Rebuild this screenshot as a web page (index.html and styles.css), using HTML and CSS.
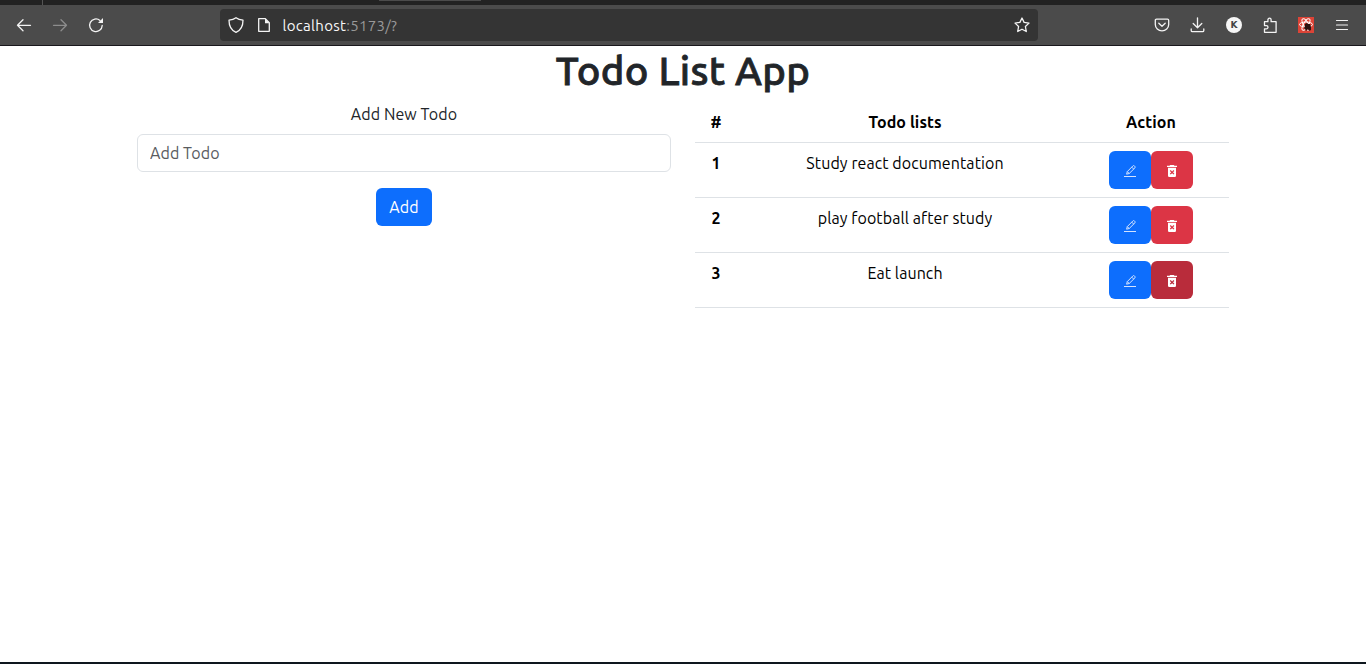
FILE: index.html
```html
<!DOCTYPE html>
<html lang="en">
<head>
<meta charset="utf-8">
<title>Todo List App</title>
<link rel="stylesheet" href="styles.css">
</head>
<body>
<svg class="defs" aria-hidden="true">
  <symbol id="pencil" viewBox="0 0 12 12">
    <path d="M0 11.500h12" stroke="#d2e3ff" stroke-width="1"/>
    <path d="M2.600 9.200 3.300 6.600 8.900.9c.5-.5 1-.5 1.500 0l.5.6c.4.4.4.9 0 1.400L5.200 8.500ZM7.700 2.100l2 2M3.300 6.600l1.900 1.900" stroke="#d2e3ff" stroke-width="1" fill="none"/>
  </symbol>
  <symbol id="trash" viewBox="0 0 10 12">
    <path fill="#fff" fill-rule="evenodd" d="M0 .7h2.500L3.200 0h3.600l.7.700H10V2H0ZM1 2.700h8v8.100q0 1.200-1.200 1.200H2.200Q1 12 1 10.800ZM3.700 5l-.9.900L4.200 7.300 2.800 8.700l.9.900L5.100 8.200l1.400 1.400.9-.9L6 7.300l1.400-1.400-.9-.9-1.400 1.400Z"/>
  </symbol>
</svg>
<div class="tabs"><i class="divider"></i><i class="active-tab"></i></div>
<nav class="toolbar">
  <div class="nav-icons">
    <svg class="icon" viewBox="0 0 16 16"><path d="M14.500 8.300H1.500M7 2.800 1.500 8.300l5.500 5.500"/></svg>
    <svg class="icon dim" viewBox="0 0 16 16"><path d="M1.500 8.300h13M9 2.800l5.500 5.500L9 13.800"/></svg>
    <svg class="icon" viewBox="0 0 16 16"><path d="M14.200 8.500A6.300 6.300 0 1 1 12 3.500"/><path class="solid" d="M15 1v5h-5Z"/></svg>
  </div>
  <div class="address">
    <svg class="icon" viewBox="0 0 16 16"><path d="M8 .7C6 2.200 3.600 2.900 1 3.200c0 6 2 10 7 12.100 5-2.100 7-6.100 7-12.100C12.400 2.900 10 2.200 8 .7Z"/></svg>
    <svg class="icon" viewBox="0 0 16 16"><path d="M2.700 1.700h6.600l4 4v8.600H2.700Z"/><path class="solid" d="M9 1.500v4.700h4.500Z"/></svg>
    <span class="url"><b>localhost</b>:5173/?</span>
    <svg class="icon star" viewBox="0 0 16 16"><path d="m8 1 2.100 4.400 4.900.7-3.600 3.400.9 5L8 12.200l-4.300 2.300.9-5L1 6.100l4.900-.7Z"/></svg>
  </div>
  <div class="tools">
    <svg class="icon" viewBox="0 0 16 16"><path d="M2.500 2.200h11q1.200 0 1.200 1.200v4.100a6.700 6.300 0 0 1-13.400 0V3.400q0-1.200 1.200-1.200Z"/><path d="m4.800 6.200 3.200 3 3.200-3"/></svg>
    <svg class="icon" viewBox="0 0 16 16"><path d="M7.500.8V10.500M3.200 6.500l4.300 4.200 4.300-4.200M1.200 12v1.500q0 1.200 1.200 1.200h10.200q1.200 0 1.200-1.200V12"/></svg>
    <span class="avatar">K</span>
    <svg class="icon" viewBox="0 0 16 16"><path d="M2.500 6V4.700h3.400V2.800a1.600 1.600 0 0 1 3.200 0v1.900h5v10.600H2.500v-3.500h1.900a1.600 1.600 0 0 0 0-3.200H2.500V6Z"/></svg>
    <svg class="ext" viewBox="0 0 16 16"><path fill="#dc4437" d="M0 0h16v16H0z"/><g fill="none" stroke="#fff" stroke-width="1"><ellipse cx="8" cy="7.500" rx="6.500" ry="2.500"/><ellipse cx="8" cy="7.500" rx="6.500" ry="2.500" transform="rotate(60 8 7.500)"/><ellipse cx="8" cy="7.500" rx="6.500" ry="2.500" transform="rotate(120 8 7.500)"/></g><path fill="#2b1210" d="m7 7 2-1 1 1 2 0 1 3v3l-2 1-1-2-2 2-1-2-1-1 1-2Z"/></svg>
    <svg class="icon menu" viewBox="0 0 16 16"><path d="M2.500 3.500h11M2.500 8h11M2.500 12.500h11"/></svg>
  </div>
</nav>
<main class="page">
  <h1 class="title">Todo List App</h1>
  <div class="columns">
    <form class="form">
      <label class="label" for="todo">Add New Todo</label>
      <input class="input" id="todo" placeholder="Add Todo">
      <button class="btn add" type="button">Add</button>
    </form>
    <table class="table">
      <thead><tr><th class="num">#</th><th>Todo lists</th><th class="action">Action</th></tr></thead>
      <tbody>
        <tr><th>1</th><td>Study react documentation</td><td><div class="buttons"><button class="btn"><svg class="pencil"><use href="#pencil"/></svg></button><button class="btn danger"><svg class="trash"><use href="#trash"/></svg></button></div></td></tr>
        <tr><th>2</th><td>play football after study</td><td><div class="buttons"><button class="btn"><svg class="pencil"><use href="#pencil"/></svg></button><button class="btn danger"><svg class="trash"><use href="#trash"/></svg></button></div></td></tr>
        <tr><th>3</th><td>Eat launch</td><td><div class="buttons"><button class="btn"><svg class="pencil"><use href="#pencil"/></svg></button><button class="btn danger pressed"><svg class="trash"><use href="#trash"/></svg></button></div></td></tr>
      </tbody>
    </table>
  </div>
</main>
</body>
</html>
```
FILE: styles.css
```css
* { box-sizing: border-box; }
body {
  margin: 0;
  height: 664px;
  display: flex;
  flex-direction: column;
  overflow: hidden;
  background: #fff;
  border-bottom: 2px solid #0e171e;
  color: #212529;
  font: 16px/24px Ubuntu, "Noto Sans", sans-serif;
  letter-spacing: 0.08px;
}
.defs { position: absolute; width: 0; height: 0; }
.tabs { height: 5px; flex: none; background: #222; display: flex; }
.divider { width: 1px; margin-left: 42px; background: #555; }
.active-tab { width: 102px; height: 1px; margin-left: 336px; background: #4b4b4b; }
.toolbar {
  height: 41px;
  flex: none;
  display: flex;
  background: #4b4b4b;
  border-bottom: 1px solid #19171c;
}
.nav-icons { width: 220px; padding: 12px 16px; display: flex; gap: 20px; }
.icon { width: 16px; height: 16px; flex: none; fill: none; stroke: #f4f4f4; stroke-width: 1.300; stroke-linejoin: round; stroke-linecap: round; }
.icon .solid { fill: #f4f4f4; stroke: none; }
.icon.dim { stroke: #8d8d8d; }
.icon.menu { stroke-width: 1.200; }
.address {
  width: 818px;
  height: 32px;
  margin-top: 4px;
  padding: 0 8px;
  display: flex;
  align-items: center;
  gap: 12px;
  background: #343434;
  border-radius: 4px;
}
.url { color: #999; font-size: 15px; letter-spacing: 0.3px; margin: 2px 0 0 -1.500px; }
.url b { color: #f8f8f8; font-weight: 400; }
.star { margin-left: auto; }
.tools { display: flex; gap: 20px; margin-left: 116px; padding-top: 12px; }
.avatar { width: 16px; height: 16px; border-radius: 50%; background: #f6f6f6; color: #444; font: 700 9px/16px "DejaVu Sans", sans-serif; text-align: center; }
.ext { width: 16px; height: 16px; }
.page { width: 1116px; margin: 0 auto; padding: 0 12px; }
.title {
  margin: 0 0 8px;
  height: 48px;
  font-size: 40px;
  line-height: 50px;
  font-weight: 500;
  text-align: center;
  letter-spacing: 0.3px;
  -webkit-text-stroke: 0.8px #212529;
}
.columns { display: grid; grid-template-columns: 534px 534px; gap: 24px; }
.form { display: flex; flex-direction: column; align-items: center; }
.label { margin-bottom: 8px; }
.input { width: 100%; height: 38px; padding: 6px 12px; border: 1px solid #dee2e6; border-radius: 6px; font: inherit; letter-spacing: inherit; margin-bottom: 16px; }
.input::placeholder { color: #595c5f; opacity: 1; }
.btn { width: 42px; height: 38px; padding: 0; border: 0; border-radius: 6px; background: #0d6efd; color: #fff; font: inherit; letter-spacing: inherit; display: flex; align-items: center; justify-content: center; }
.add { width: 56px; }
.danger { background: #dc3545; }
.pressed { background: #b92c3b; }
.pencil { width: 12px; height: 12px; margin-top: 2px; }
.trash { width: 10px; height: 12px; margin-top: 2px; }
.table { width: 534px; border-collapse: collapse; table-layout: fixed; color: #000; text-align: center; }
.table th, .table td { padding: 8px 8px; border-bottom: 1px solid #dee2e6; vertical-align: top; }
.table .num { width: 42px; }
.table .action { width: 156px; }
.buttons { display: flex; justify-content: center; }
```
